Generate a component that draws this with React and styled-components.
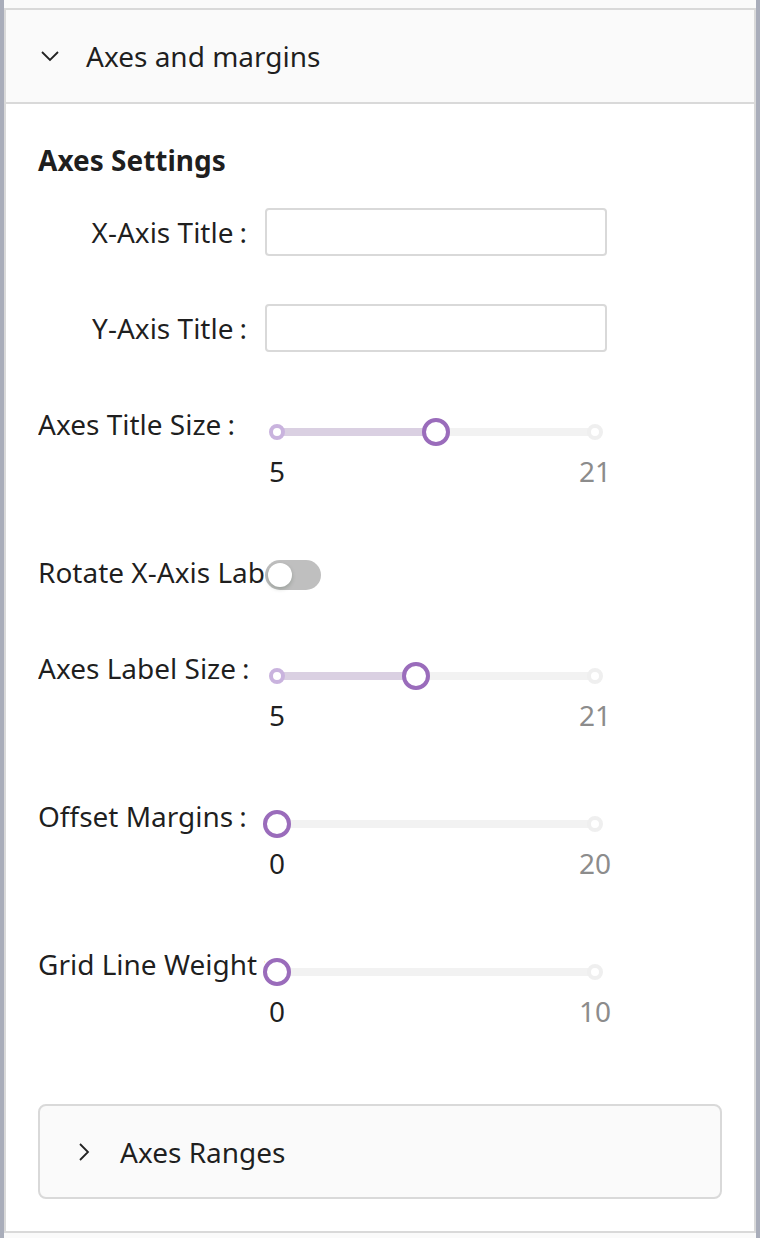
import React from "react"
import styled, { createGlobalStyle } from "styled-components"

const GlobalStyle = createGlobalStyle`
  html, body {
    margin: 0;
    padding: 0;
    background: #a9adba;
  }
  body {
    font-family: "Noto Sans", "Noto Sans CJK JP", sans-serif;
    color: rgba(0, 0, 0, 0.88);
  }
`

const Frame = styled.div`
  margin: 0 4px;
  width: 752px;
  background: #fafafa;
  padding-top: 8px;
  height: 1238px;
  box-sizing: border-box;
`
const Panel = styled.section`
  border: 2px solid #d9d9d9;
  background: #fff;
`
const PanelHeader = styled.div`
  display: flex;
  align-items: center;
  height: 92px;
  padding: 0 32px;
  background: #fafafa;
  border-bottom: 2px solid #d9d9d9;
  font-size: 28px;
  line-height: 44px;
`
const Arrow = styled.span`
  display: flex;
  width: 24px;
  margin-right: 24px;
  justify-content: center;
`
const PanelBody = styled.div`
  padding: 32px 32px 32px;
`
const Heading = styled.h3`
  margin: 0 0 24px;
  font-size: 28px;
  font-weight: 700;
  line-height: 48px;
`
const Row = styled.div`
  display: grid;
  grid-template-columns: 227px 342px;
  align-items: start;
  min-height: ${(p) => p.$h || 48}px;
  margin-bottom: ${(p) => p.$mb ?? 48}px;
`
const Label = styled.label`
  display: block;
  font-size: 28px;
  line-height: 48px;
  white-space: nowrap;
  overflow: hidden;
  text-align: ${(p) => (p.$left ? "left" : "right")};
  &::after {
    content: ":";
    margin: 0 18px 0 6px;
  }
`
const Input = styled.input`
  box-sizing: border-box;
  width: 342px;
  height: 48px;
  border: 2px solid #d9d9d9;
  border-radius: 4px;
  padding: 0 14px;
  font: inherit;
  font-size: 28px;
  outline: none;
`
const SliderBox = styled.div`
  padding: 28px 12px 0;
`
const Rail = styled.div`
  position: relative;
  height: 8px;
  border-radius: 4px;
  background: #f2f2f2;
`
const Track = styled.div`
  position: absolute;
  left: 0;
  top: 0;
  height: 8px;
  border-radius: 4px;
  background: #dad0e2;
`
const Dot = styled.span`
  position: absolute;
  top: 50%;
  width: 16px;
  height: 16px;
  box-sizing: border-box;
  border-radius: 50%;
  background: #fff;
  border: 4px solid ${(p) => (p.$on ? "#c9b3de" : "#efefef")};
  transform: translate(-50%, -50%);
`
const Handle = styled.span`
  position: absolute;
  top: 50%;
  width: 28px;
  height: 28px;
  box-sizing: border-box;
  border-radius: 50%;
  background: #fff;
  border: 4px solid #9a6cbb;
  transform: translate(-50%, -50%);
`
const Marks = styled.div`
  position: relative;
  height: 36px;
  margin-top: 17px;
`
const Mark = styled.span`
  position: absolute;
  top: 0;
  font-size: 28px;
  line-height: 36px;
  transform: translateX(-50%);
  color: ${(p) => (p.$on ? "rgba(0,0,0,0.88)" : "#8c8c8c")};
`
const Switch = styled.span`
  position: relative;
  display: block;
  margin-top: 12px;
  width: 56px;
  height: 30px;
  border-radius: 15px;
  background: #bfbfbf;
`
const Knob = styled.span`
  position: absolute;
  left: 3px;
  top: 3px;
  width: 24px;
  height: 24px;
  border-radius: 50%;
  background: #fff;
  box-shadow: 0 2px 4px rgba(0, 35, 11, 0.2);
`
const SubPanel = styled.div`
  border: 2px solid #d9d9d9;
  border-radius: 8px;
  background: #fafafa;
`
const SubHeader = styled.div`
  display: flex;
  align-items: center;
  height: 91px;
  padding: 0 32px;
  font-size: 28px;
`

const Chevron = ({ dir }) => (
  <svg width="20" height="20" viewBox="0 0 20 20" fill="none" stroke="#222" strokeWidth="1.8">
    {dir === "down" ? <path d="M2 6 L10 14 L18 6" /> : <path d="M6 2 L14 10 L6 18" />}
  </svg>
)

function Slider({ min, max, value }) {
  const pct = ((value - min) / (max - min)) * 100
  return (
    <SliderBox>
      <Rail>
        <Track style={{ width: pct + "%" }} />
        <Dot $on style={{ left: "0%" }} />
        <Dot style={{ left: "100%" }} />
        <Handle style={{ left: pct + "%" }} />
      </Rail>
      <Marks>
        <Mark $on style={{ left: "0%" }}>{min}</Mark>
        <Mark style={{ left: "100%" }}>{max}</Mark>
      </Marks>
    </SliderBox>
  )
}

const sliders = [
  { label: "Axes Title Size", min: 5, max: 21, value: 13 },
  { label: "Axes Label Size", min: 5, max: 21, value: 12 },
  { label: "Offset Margins", min: 0, max: 20, value: 0 },
  { label: "Grid Line Weight", min: 0, max: 10, value: 0 },
]

function SliderRow({ s, mb }) {
  return (
    <Row $h={100} $mb={mb}>
      <Label $left>{s.label}</Label>
      <Slider min={s.min} max={s.max} value={s.value} />
    </Row>
  )
}

export default function App() {
  return (
    <>
      <GlobalStyle />
      <Frame>
        <Panel>
          <PanelHeader>
            <Arrow>
              <Chevron dir="down" />
            </Arrow>
            Axes and margins
          </PanelHeader>
          <PanelBody>
            <Heading>Axes Settings</Heading>
            <Row>
              <Label>X-Axis Title</Label>
              <Input />
            </Row>
            <Row>
              <Label>Y-Axis Title</Label>
              <Input />
            </Row>
            <SliderRow s={sliders[0]} />
            <Row>
              <Label $left>Rotate X-Axis Labels</Label>
              <Switch>
                <Knob />
              </Switch>
            </Row>
            <SliderRow s={sliders[1]} />
            <SliderRow s={sliders[2]} />
            <SliderRow s={sliders[3]} mb={64} />
            <SubPanel>
              <SubHeader>
                <Arrow>
                  <Chevron dir="right" />
                </Arrow>
                Axes Ranges
              </SubHeader>
            </SubPanel>
          </PanelBody>
        </Panel>
      </Frame>
    </>
  )
}
